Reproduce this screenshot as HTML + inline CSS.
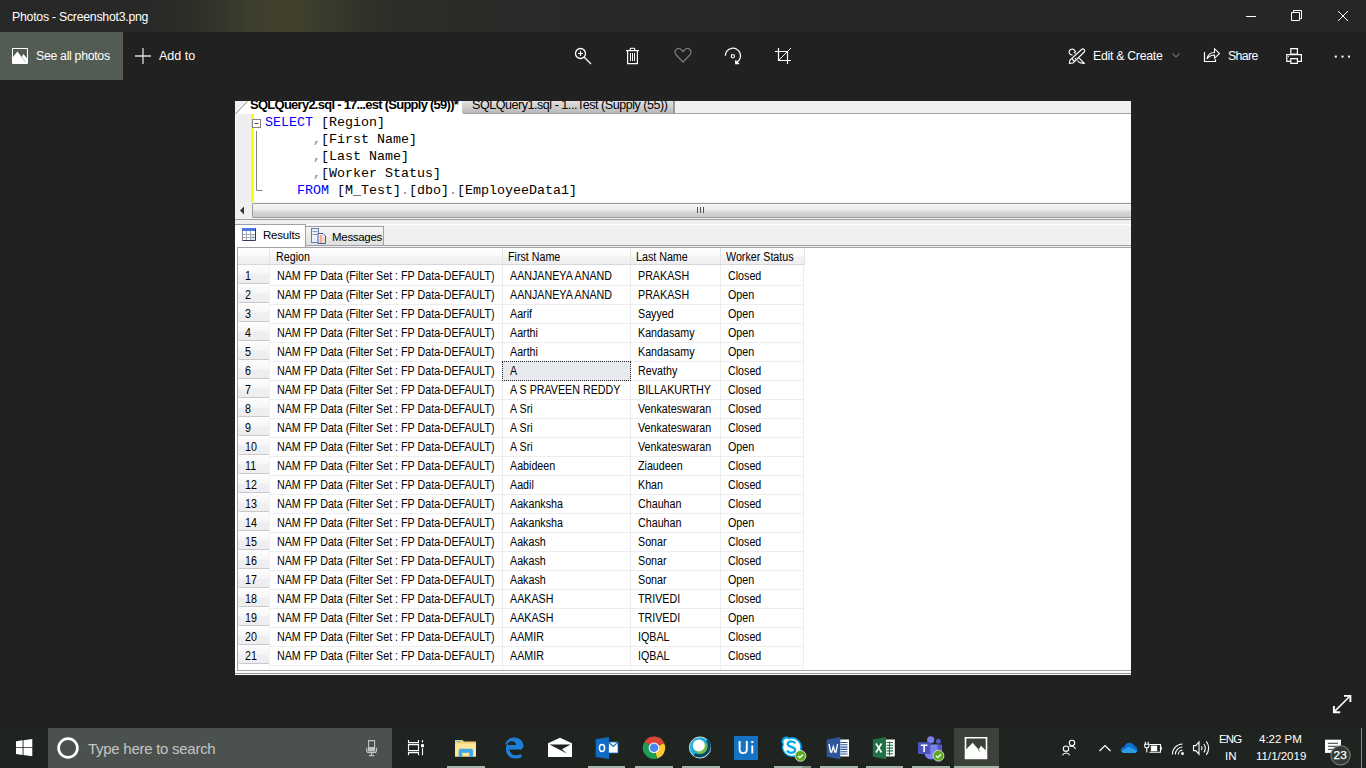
<!DOCTYPE html>
<html><head><meta charset="utf-8"><title>Photos</title>
<style>
*{margin:0;padding:0;box-sizing:border-box}
html,body{width:1366px;height:768px;overflow:hidden;background:#212121;font-family:"Liberation Sans",sans-serif;position:relative}
.a{position:absolute}
/* title bar */
#title{position:absolute;left:0;top:0;width:1366px;height:32px;background:
 linear-gradient(90deg,#272727 0,#282827 140px,#2c2c28 185px,#34342a 220px,#3d3d2d 250px,#41412e 275px,#41412e 295px,#3c3c2d 320px,#34342a 350px,#2e2e29 390px,#2b2b28 450px,#292928 560px,#272727 760px,#262626 1366px);}
#title .t{position:absolute;left:12px;top:9px;font-size:12px;color:#fff;white-space:pre}
#tb{position:absolute;left:0;top:32px;width:1366px;height:48px;background:#212121}
#seeall{position:absolute;left:0;top:32px;width:123px;height:48px;background:#535c53}
.lbl{position:absolute;color:#fff;font-size:14px;white-space:pre}
/* SSMS */
#ss{position:absolute;left:235px;top:101px;width:896px;height:574px;background:#fff;overflow:hidden}
.mono{font-family:"Liberation Mono",monospace;font-size:13.33px;white-space:pre;color:#000}
.kw{color:#0000ff}.gr{color:#808080}
/* grid */
.rn{position:absolute;left:238px;width:31px;height:19px;background:linear-gradient(#fdfdfd 0%,#f7f7f8 45%,#efeff1 55%,#eeeef0 100%);}
.rn span{position:absolute;left:7px;top:4px;font-size:12.3px;color:#000;transform:scaleX(0.87);transform-origin:0 0}
.rnl{position:absolute;left:239px;width:30px;height:1px;background:#c9c9cc}
.hl{position:absolute;left:269px;width:534px;height:1px;background:#ededed}
.c{position:absolute;height:18px;font-size:12.3px;letter-spacing:0px;color:#000;white-space:pre;padding-top:4px;transform:scaleX(0.87);transform-origin:0 0}
.t1{left:277px;letter-spacing:0px}.t2{left:510px}.t3{left:638px}.t4{left:728px}
.selbg{position:absolute;left:502px;width:129px;height:20px;background:#e6eaee}
.selbox{position:absolute;left:502px;width:129px;height:20px;border:1px dotted #222}
.vl{position:absolute;top:265px;width:1px;height:405px;background:#ededed}
.hd{position:absolute;top:248px;height:17px;background:linear-gradient(#fff 0%,#fbfbfb 45%,#f2f2f4 55%,#efeff1 100%);border-right:1px solid #e4e4e6}
.hd span{position:absolute;top:2px;font-size:12.3px;color:#000;white-space:pre;transform:scaleX(0.87);transform-origin:0 0}
/* taskbar */
#task{position:absolute;left:0;top:728px;width:1366px;height:40px;background:#1f2421}
#search{position:absolute;left:48px;top:728px;width:344px;height:40px;background:#4b514d}
.ind{position:absolute;top:766px;height:2px;background:#a3b5a7}
.tray{position:absolute;color:#fff;font-size:12px;white-space:pre}

</style></head><body>
<div id="title"><div class="t" style="font-size:12.3px;top:10px;letter-spacing:-0.25px">Photos - Screenshot3.png</div>
<svg class="a" style="left:1240px;top:0" width="126" height="32" viewBox="1240 0 126 32">
 <path d="M1246 16.5h10" stroke="#fff" stroke-width="1"/>
 <path d="M1291.5 12.5h8v8h-8z M1293.5 12.5v-2h8v8h-2" stroke="#fff" stroke-width="1" fill="none"/>
 <path d="M1338 11l10 10M1348 11l-10 10" stroke="#fff" stroke-width="1"/>
</svg>
</div>
<div id="tb"></div>
<div id="seeall"></div>
<svg class="a" style="left:0;top:32px" width="1366" height="48" viewBox="0 32 1366 48">
 <!-- see all photos icon -->
 <path d="M12.5 48.5h15v15h-15z" stroke="#fff" fill="none" stroke-width="1"/>
 <path d="M13 57L17.4 51.6 21.6 57 23.3 54 27 58.2V63.5H13z" fill="#fff"/>
 <path d="M21.8 57.2l3.6 4.8" stroke="#535c53" stroke-width="0.7" stroke-dasharray="1 0.8"/>
 <!-- plus -->
 <path d="M143 48v16M135 56h16" stroke="#ddd" stroke-width="1.3"/>
 <!-- zoom -->
 <circle cx="580.5" cy="53.5" r="5" stroke="#fff" fill="none" stroke-width="1.3"/>
 <path d="M578 53.5h5M580.5 51v5" stroke="#fff" stroke-width="1.2"/>
 <path d="M584 57l7 7" stroke="#fff" stroke-width="1.3"/>
 <!-- trash -->
 <path d="M626 50.6h13M627.6 50.6v13h9.8v-13" stroke="#fff" fill="none" stroke-width="1.2"/>
 <path d="M630.3 50.4v-1.6a.5.5 0 0 1 .5-.5h3.4a.5.5 0 0 1 .5.5v1.6" stroke="#fff" fill="none" stroke-width="1.1"/>
 <path d="M630.5 53v8M632.5 53v8M634.5 53v8" stroke="#fff" stroke-width="1"/>
 <!-- heart -->
 <path d="M683 62l-6.8-7c-1.6-1.7-1.6-4.2 0-5.5 1.6-1.3 3.9-1.1 5.3.5l1.5 1.5 1.5-1.5c1.4-1.6 3.7-1.8 5.3-.5 1.6 1.3 1.6 3.8 0 5.5z" stroke="#7c7c7c" fill="none" stroke-width="1.2" stroke-linejoin="round"/>
 <!-- rotate -->
 <path d="M725.3 55.8a7.6 7.6 0 1 1 11.3 6.6" stroke="#fff" fill="none" stroke-width="1.25"/>
 <path d="M735.8 60.3v3.2h3.3" stroke="#fff" fill="none" stroke-width="1.4"/>
 <path d="M736.2 63.1l1.4-1.4" stroke="#fff" stroke-width="1.4"/>
 <rect x="731.4" y="54.8" width="2.9" height="2.9" rx="0.6" stroke="#fff" fill="none" stroke-width="1.1"/>
 <!-- crop -->
 <path d="M778.5 48v12.5h12.5M775 51.5h12.5v12.5" stroke="#fff" fill="none" stroke-width="1.2"/>
 <path d="M778.8 60.2l12.2-12.2" stroke="#fff" fill="none" stroke-width="1"/>
 <!-- edit & create -->
 <g stroke="#fff" fill="none" stroke-width="1.15" stroke-linejoin="round">
  <path d="M1081.6 49.5a1.8 1.8 0 0 1 2.6 2.5L1072.9 63 1069.4 63.5 1069.9 60.1z"/>
  <path d="M1071.6 58.5l2.9 2.9"/>
  <path d="M1075.4 53.6l-1.5-1.5M1072.6 54.9c-1.3.2-2.8-.4-3.3-1.8-.6-1.6.4-3.4 2-3.8 1.5-.4 3 .3 3.6 1.6l1.1 1.3"/>
  <path d="M1078.6 57.7l5.8 5.8-3.6-.6c-1.4-.3-2.6-1.2-3.3-2.4"/>
 </g>
 <circle cx="1075.3" cy="58.5" r="0.7" fill="#fff"/>
 <path d="M1172.5 53.5l3.5 3.5 3.5-3.5" stroke="#5d6d5d" fill="none" stroke-width="1.2"/>
 <!-- share -->
 <path d="M1204.5 52v9.5h11v-2.3" stroke="#fff" fill="none" stroke-width="1.2"/>
 <path d="M1207 58.8c0.8-4 3.5-6.3 7.5-6.3v-3.8l5 4.8-5 4.8v-3.3c-3 0-5.5 1.3-7.5 3.8z" stroke="#fff" fill="none" stroke-width="1.1" stroke-linejoin="miter"/>
 <!-- print -->
 <path d="M1290.8 48.6h6.6v5.4h-6.6z" stroke="#fff" fill="none" stroke-width="1.2"/>
 <path d="M1286.8 54.6h14.6v6.8h-14.6z" stroke="#fff" fill="none" stroke-width="1.2"/>
 <path d="M1290.8 58.6h6.6v4.8h-6.6z" stroke="#fff" fill="#212121" stroke-width="1.2"/>
 <circle cx="1288.6" cy="56.6" r="0.55" fill="#fff"/>
 <!-- dots -->
 <rect x="1334.8" y="55.6" width="2" height="2" fill="#fff"/><rect x="1341.5" y="55.6" width="2" height="2" fill="#fff"/><rect x="1348" y="55.6" width="2" height="2" fill="#fff"/>
</svg>
<div class="lbl" style="left:36px;top:49px;font-size:12.3px;letter-spacing:-0.3px">See all photos</div>
<div class="lbl" style="left:159px;top:49px;font-size:12.5px">Add to</div>
<div class="lbl" style="left:1093px;top:49px;font-size:12.3px;letter-spacing:-0.28px">Edit &amp; Create</div>
<div class="lbl" style="left:1228px;top:49px;font-size:12.3px;letter-spacing:-0.6px">Share</div>

<!-- SSMS screenshot -->
<div id="ss"></div>
<!-- tab strip -->
<div class="a" style="left:235px;top:101px;width:896px;height:13px;background:#f0f0f0"></div>
<div class="a" style="left:235px;top:113px;width:896px;height:1px;background:#a0a0a0"></div>
<svg class="a" style="left:235px;top:101px" width="228" height="14" viewBox="0 0 228 14">
 <path d="M0 13L12 0H228V14H0z" fill="#fff"/>
 <path d="M0.5 13L12.5 0.5" stroke="#8a8a8a" stroke-width="1"/>
 <rect x="0" y="13" width="1" height="1" fill="#fff"/>
</svg>
<div class="a" style="left:235px;top:101px;width:896px;height:13px;overflow:hidden">
 <div class="a" style="left:15px;top:-4px;font-family:'Liberation Sans';font-weight:bold;font-size:13px;letter-spacing:-0.74px;white-space:pre;color:#000">SQLQuery2.sql - 17...est (Supply (59))*</div>
 <div class="a" style="left:227px;top:0;width:213px;height:12px;background:linear-gradient(#e2e2e2,#b9b9b9);border-right:2px solid #9a9a9a"></div>
 <div class="a" style="left:237px;top:-3px;font-family:'Liberation Sans';font-size:12.5px;letter-spacing:-0.45px;white-space:pre;color:#000">SQLQuery1.sql - 1...Test (Supply (55))</div>
</div>
<!-- editor -->
<div class="a" style="left:235px;top:114px;width:16px;height:88px;background:#eeeef0"></div>
<div class="a" style="left:235px;top:114px;width:1px;height:88px;background:#fff"></div>
<div class="a" style="left:251px;top:114px;width:3px;height:88px;background:#ffff00"></div>
<svg class="a" style="left:250px;top:114px" width="16" height="88" viewBox="0 0 16 88">
 <rect x="2.5" y="5.5" width="8" height="8" stroke="#808080" fill="#fff" stroke-width="1"/>
 <path d="M4.5 9.5h4" stroke="#555" stroke-width="1"/>
 <path d="M6.5 17v59.5h6" stroke="#808080" fill="none" stroke-width="1"/>
</svg>
<div class="a mono" style="left:265px;top:114px;line-height:17px"><span class="kw">SELECT</span> [Region]
      <span class="gr">,</span>[First Name]
      <span class="gr">,</span>[Last Name]
      <span class="gr">,</span>[Worker Status]
    <span class="kw">FROM</span> [M_Test]<span class="gr">.</span>[dbo]<span class="gr">.</span>[EmployeeData1]</div>
<!-- h scrollbar -->
<div class="a" style="left:235px;top:202px;width:896px;height:17px;background:#f0f0f0"></div>
<div class="a" style="left:235px;top:219px;width:896px;height:1px;background:#a0a0a0"></div>
<svg class="a" style="left:235px;top:202px" width="17" height="17"><path d="M5 8.5l4-4v8z" fill="#333"/></svg>
<div class="a" style="left:252px;top:203px;width:879px;height:15px;border:1px solid #9c9c9c;border-right:none;border-radius:2px 0 0 2px;background:linear-gradient(#f6f6f6 0%,#efefef 40%,#d8d8da 60%,#c9c9cc 100%)"></div>
<svg class="a" style="left:696px;top:205px" width="10" height="10"><path d="M1.5 2v6M4.5 2v6M7.5 2v6" stroke="#555" stroke-width="1"/></svg>
<!-- splitter + results tabs -->
<div class="a" style="left:235px;top:220px;width:896px;height:4px;background:#f0f0f0"></div>
<div class="a" style="left:235px;top:225px;width:896px;height:22px;background:#f0f0f0"></div>
<div class="a" style="left:235px;top:224px;width:71px;height:23px;background:#fff;border-right:1px solid #a0a0a8;border-top:1px solid #a0a0a8"></div>
<div class="a" style="left:306px;top:226px;width:78px;height:20px;background:linear-gradient(#f6f6f6,#e0e0e0);border:1px solid #a0a0a8;border-left:none"></div>
<div class="a" style="left:305px;top:245px;width:826px;height:1px;background:#9da0aa"></div>
<svg class="a" style="left:242px;top:228px" width="15" height="14" viewBox="0 0 15 14">
 <rect x="0" y="0" width="14" height="13" fill="#fff"/>
 <rect x="0" y="0" width="14" height="3" fill="#4a78e0"/>
 <path d="M0.5 3v9.5" stroke="#8a8aa0" fill="none"/><path d="M0.5 12.5h13V0.5" stroke="#333a5a" fill="none"/>
 <path d="M1 6.5h12M1 9.5h12M4.5 3v9M8.5 3v9" stroke="#a8a8b0" stroke-width="1"/>
 <rect x="9.5" y="7" width="3" height="2" fill="#bfe0f8"/><rect x="9.5" y="10" width="3" height="2" fill="#bfe0f8"/>
</svg>
<div class="a" style="left:263px;top:229px;font-size:11.5px;letter-spacing:-0.2px;color:#000">Results</div>
<svg class="a" style="left:311px;top:228px" width="16" height="16" viewBox="0 0 16 16">
 <rect x="0.5" y="0.5" width="7" height="14" fill="#e8f0f8" stroke="#6a78b0"/>
 <path d="M1.5 3.5h5M1.5 6.5h5" stroke="#8a98b8"/>
 <path d="M7 5.5h5l2.5 2.5v7.5H7z" fill="#fff" stroke="#4a58a0"/>
 <path d="M8.5 8h3M8.5 10h3M8.5 12h3M8.5 14h3" stroke="#f05a28"/>
 <path d="M12.5 10h1M12.5 12h1M12.5 14h1" stroke="#4a9a30"/>
</svg>
<div class="a" style="left:332px;top:231px;font-size:11.5px;letter-spacing:-0.3px;color:#000">Messages</div>
<!-- grid -->
<div class="a" style="left:237px;top:247px;width:894px;height:424px;background:#fff;border:1px solid #a3a3a8;border-right:none"></div>
<div class="hd" style="left:238px;width:32px"></div>
<div class="hd" style="left:270px;width:233px"><span style="left:6px">Region</span></div>
<div class="hd" style="left:503px;width:128px"><span style="left:5px">First Name</span></div>
<div class="hd" style="left:631px;width:90px"><span style="left:5px">Last Name</span></div>
<div class="hd" style="left:721px;width:84px"><span style="left:5px">Worker Status</span></div>
<div class="a" style="left:238px;top:264px;width:566px;height:1px;background:#d8d8da"></div>
<div class="vl" style="left:502px"></div>
<div class="vl" style="left:630px"></div>
<div class="vl" style="left:720px"></div>
<div class="vl" style="left:803px"></div>
<div class="vl" style="left:269px;background:#f2f2f2"></div>
<div class="selbg" style="top:361px"></div>
<div class="rn" style="top:265px"><span>1</span></div>
<div class="c t1" style="top:265px">NAM FP Data (Filter Set : FP Data-DEFAULT)</div>
<div class="c t2" style="top:265px">AANJANEYA ANAND</div>
<div class="c t3" style="top:265px">PRAKASH</div>
<div class="c t4" style="top:265px">Closed</div>
<div class="rn" style="top:284px"><span>2</span></div>
<div class="c t1" style="top:284px">NAM FP Data (Filter Set : FP Data-DEFAULT)</div>
<div class="c t2" style="top:284px">AANJANEYA ANAND</div>
<div class="c t3" style="top:284px">PRAKASH</div>
<div class="c t4" style="top:284px">Open</div>
<div class="rn" style="top:303px"><span>3</span></div>
<div class="c t1" style="top:303px">NAM FP Data (Filter Set : FP Data-DEFAULT)</div>
<div class="c t2" style="top:303px">Aarif</div>
<div class="c t3" style="top:303px">Sayyed</div>
<div class="c t4" style="top:303px">Open</div>
<div class="rn" style="top:322px"><span>4</span></div>
<div class="c t1" style="top:322px">NAM FP Data (Filter Set : FP Data-DEFAULT)</div>
<div class="c t2" style="top:322px">Aarthi</div>
<div class="c t3" style="top:322px">Kandasamy</div>
<div class="c t4" style="top:322px">Open</div>
<div class="rn" style="top:341px"><span>5</span></div>
<div class="c t1" style="top:341px">NAM FP Data (Filter Set : FP Data-DEFAULT)</div>
<div class="c t2" style="top:341px">Aarthi</div>
<div class="c t3" style="top:341px">Kandasamy</div>
<div class="c t4" style="top:341px">Open</div>
<div class="rn" style="top:360px"><span>6</span></div>
<div class="c t1" style="top:360px">NAM FP Data (Filter Set : FP Data-DEFAULT)</div>
<div class="c t2" style="top:360px">A</div>
<div class="c t3" style="top:360px">Revathy</div>
<div class="c t4" style="top:360px">Closed</div>
<div class="rn" style="top:379px"><span>7</span></div>
<div class="c t1" style="top:379px">NAM FP Data (Filter Set : FP Data-DEFAULT)</div>
<div class="c t2" style="top:379px">A S PRAVEEN REDDY</div>
<div class="c t3" style="top:379px">BILLAKURTHY</div>
<div class="c t4" style="top:379px">Closed</div>
<div class="rn" style="top:398px"><span>8</span></div>
<div class="c t1" style="top:398px">NAM FP Data (Filter Set : FP Data-DEFAULT)</div>
<div class="c t2" style="top:398px">A Sri</div>
<div class="c t3" style="top:398px">Venkateswaran</div>
<div class="c t4" style="top:398px">Closed</div>
<div class="rn" style="top:417px"><span>9</span></div>
<div class="c t1" style="top:417px">NAM FP Data (Filter Set : FP Data-DEFAULT)</div>
<div class="c t2" style="top:417px">A Sri</div>
<div class="c t3" style="top:417px">Venkateswaran</div>
<div class="c t4" style="top:417px">Closed</div>
<div class="rn" style="top:436px"><span>10</span></div>
<div class="c t1" style="top:436px">NAM FP Data (Filter Set : FP Data-DEFAULT)</div>
<div class="c t2" style="top:436px">A Sri</div>
<div class="c t3" style="top:436px">Venkateswaran</div>
<div class="c t4" style="top:436px">Open</div>
<div class="rn" style="top:455px"><span>11</span></div>
<div class="c t1" style="top:455px">NAM FP Data (Filter Set : FP Data-DEFAULT)</div>
<div class="c t2" style="top:455px">Aabideen</div>
<div class="c t3" style="top:455px">Ziaudeen</div>
<div class="c t4" style="top:455px">Closed</div>
<div class="rn" style="top:474px"><span>12</span></div>
<div class="c t1" style="top:474px">NAM FP Data (Filter Set : FP Data-DEFAULT)</div>
<div class="c t2" style="top:474px">Aadil</div>
<div class="c t3" style="top:474px">Khan</div>
<div class="c t4" style="top:474px">Closed</div>
<div class="rn" style="top:493px"><span>13</span></div>
<div class="c t1" style="top:493px">NAM FP Data (Filter Set : FP Data-DEFAULT)</div>
<div class="c t2" style="top:493px">Aakanksha</div>
<div class="c t3" style="top:493px">Chauhan</div>
<div class="c t4" style="top:493px">Closed</div>
<div class="rn" style="top:512px"><span>14</span></div>
<div class="c t1" style="top:512px">NAM FP Data (Filter Set : FP Data-DEFAULT)</div>
<div class="c t2" style="top:512px">Aakanksha</div>
<div class="c t3" style="top:512px">Chauhan</div>
<div class="c t4" style="top:512px">Open</div>
<div class="rn" style="top:531px"><span>15</span></div>
<div class="c t1" style="top:531px">NAM FP Data (Filter Set : FP Data-DEFAULT)</div>
<div class="c t2" style="top:531px">Aakash</div>
<div class="c t3" style="top:531px">Sonar</div>
<div class="c t4" style="top:531px">Closed</div>
<div class="rn" style="top:550px"><span>16</span></div>
<div class="c t1" style="top:550px">NAM FP Data (Filter Set : FP Data-DEFAULT)</div>
<div class="c t2" style="top:550px">Aakash</div>
<div class="c t3" style="top:550px">Sonar</div>
<div class="c t4" style="top:550px">Closed</div>
<div class="rn" style="top:569px"><span>17</span></div>
<div class="c t1" style="top:569px">NAM FP Data (Filter Set : FP Data-DEFAULT)</div>
<div class="c t2" style="top:569px">Aakash</div>
<div class="c t3" style="top:569px">Sonar</div>
<div class="c t4" style="top:569px">Open</div>
<div class="rn" style="top:588px"><span>18</span></div>
<div class="c t1" style="top:588px">NAM FP Data (Filter Set : FP Data-DEFAULT)</div>
<div class="c t2" style="top:588px">AAKASH</div>
<div class="c t3" style="top:588px">TRIVEDI</div>
<div class="c t4" style="top:588px">Closed</div>
<div class="rn" style="top:607px"><span>19</span></div>
<div class="c t1" style="top:607px">NAM FP Data (Filter Set : FP Data-DEFAULT)</div>
<div class="c t2" style="top:607px">AAKASH</div>
<div class="c t3" style="top:607px">TRIVEDI</div>
<div class="c t4" style="top:607px">Open</div>
<div class="rn" style="top:626px"><span>20</span></div>
<div class="c t1" style="top:626px">NAM FP Data (Filter Set : FP Data-DEFAULT)</div>
<div class="c t2" style="top:626px">AAMIR</div>
<div class="c t3" style="top:626px">IQBAL</div>
<div class="c t4" style="top:626px">Closed</div>
<div class="rn" style="top:645px"><span>21</span></div>
<div class="c t1" style="top:645px">NAM FP Data (Filter Set : FP Data-DEFAULT)</div>
<div class="c t2" style="top:645px">AAMIR</div>
<div class="c t3" style="top:645px">IQBAL</div>
<div class="c t4" style="top:645px">Closed</div>
<div class="hl" style="top:285px"></div>
<div class="rnl" style="top:283px"></div>
<div class="hl" style="top:304px"></div>
<div class="rnl" style="top:302px"></div>
<div class="hl" style="top:323px"></div>
<div class="rnl" style="top:321px"></div>
<div class="hl" style="top:342px"></div>
<div class="rnl" style="top:340px"></div>
<div class="hl" style="top:361px"></div>
<div class="rnl" style="top:359px"></div>
<div class="hl" style="top:380px"></div>
<div class="rnl" style="top:378px"></div>
<div class="hl" style="top:399px"></div>
<div class="rnl" style="top:397px"></div>
<div class="hl" style="top:418px"></div>
<div class="rnl" style="top:416px"></div>
<div class="hl" style="top:437px"></div>
<div class="rnl" style="top:435px"></div>
<div class="hl" style="top:456px"></div>
<div class="rnl" style="top:454px"></div>
<div class="hl" style="top:475px"></div>
<div class="rnl" style="top:473px"></div>
<div class="hl" style="top:494px"></div>
<div class="rnl" style="top:492px"></div>
<div class="hl" style="top:513px"></div>
<div class="rnl" style="top:511px"></div>
<div class="hl" style="top:532px"></div>
<div class="rnl" style="top:530px"></div>
<div class="hl" style="top:551px"></div>
<div class="rnl" style="top:549px"></div>
<div class="hl" style="top:570px"></div>
<div class="rnl" style="top:568px"></div>
<div class="hl" style="top:589px"></div>
<div class="rnl" style="top:587px"></div>
<div class="hl" style="top:608px"></div>
<div class="rnl" style="top:606px"></div>
<div class="hl" style="top:627px"></div>
<div class="rnl" style="top:625px"></div>
<div class="hl" style="top:646px"></div>
<div class="rnl" style="top:644px"></div>
<div class="hl" style="top:665px"></div>
<div class="rnl" style="top:663px"></div>
<div class="selbox" style="top:361px"></div>
<div class="a" style="left:235px;top:671px;width:896px;height:2px;background:#fff"></div>
<div class="a" style="left:235px;top:673px;width:896px;height:1px;background:#8e909a"></div>
<div class="a" style="left:235px;top:674px;width:896px;height:1px;background:#fff"></div>

<!-- expand icon -->
<svg class="a" style="left:1330px;top:691px" width="24" height="24" viewBox="1330 691 24 24">
 <path d="M1334.6 711.4l15.2-15.2" stroke="#fff" stroke-width="1.5"/>
 <path d="M1344 695.9h6.4v6.2M1333.9 705.9v6.3h6.3" stroke="#fff" fill="none" stroke-width="1.9"/>
</svg>

<!-- taskbar -->
<div id="task"></div>
<div id="search"></div>
<div class="a" style="left:954px;top:728px;width:45px;height:40px;background:#3a4239"></div>
<svg class="a" style="left:0;top:728px" width="1366" height="40" viewBox="0 728 1366 40">
 <!-- windows logo -->
 <path d="M16 741.2l6.6-.9v6.9H16z M23.5 740.2l8.8-1.2v8.2h-8.8z M16 748h6.6v6.9l-6.6-.9z M23.5 748h8.8v8.2l-8.8-1.2z" fill="#fff"/>
 <!-- cortana -->
 <circle cx="68" cy="748" r="9.4" stroke="#fff" stroke-width="2.7" fill="none"/>
 <!-- mic -->
 <path d="M368.6 740.6h6v10.4h-6z" stroke="#c4c4c4" fill="none" stroke-width="1.1"/>
 <path d="M368.6 747h6v4h-6z" fill="#c4c4c4"/>
 <path d="M366.7 747.8v2.8a2 2 0 0 0 2 2h5.8a2 2 0 0 0 2-2v-2.8M371.6 752.6v2.8M369 755.6h5.2" stroke="#c4c4c4" fill="none" stroke-width="1.1"/>
 <!-- task view -->
 <path d="M408.5 740v2.6h10v-2.6M408.5 744.6h10v6h-10z M408.5 755.2v-2.6h10v2.6M422.5 740v2.6M422.5 748.2v7" stroke="#fff" fill="none" stroke-width="1.1"/>
 <rect x="421" y="744.2" width="3" height="3" fill="#fff"/>
 <!-- explorer -->
 <path d="M455 740h7.5l1.5 1.5H476V756.5H455z" fill="#f2cf6a"/>
 <path d="M455 743.5h21V756.5H455z" fill="#fde59a"/>
 <path d="M456 740.8h5v1.2h-5z" fill="#78c0e8"/>
 <path d="M458.7 757v-6.5a1.8 1.8 0 0 1 1.8-1.8h10.7a1.8 1.8 0 0 1 1.8 1.8V757h-3.6v-4.3h-7.1V757z" fill="#3ea8ea"/>
 <!-- edge -->
 <path d="M521.5 749.5h-12c0.3 3.5 3 5.8 6.8 5.8 2.2 0 4-.5 5.2-1.2v3.2c-1.5.8-3.5 1.2-5.8 1.2-6 0-9.8-4-9.8-9.5 0-3 1.2-6 3.5-7.8-1 1.3-1.5 2.5-1.7 3.8h8.5c-.2-2.3-1.8-3.8-4.3-3.8-3 0-5 1.8-7 4.3.8-4.8 4.5-8 9.3-8 5.5 0 9.3 3.8 9.3 9z" fill="#1e7fd8"/>
 <!-- mail -->
 <path d="M548 743.3L560 737.8 572 743.3V757H548z" fill="#fff"/>
 <path d="M549.5 744.4H570.6L562 749.2 566.8 753.4z" fill="#1e2320"/>
 <!-- outlook -->
 <path d="M595.7 739.2L609 736.9V759L595.7 756.9z" fill="#0f6cc4"/>
 <path d="M608.5 742h9.5v11h-9.5z" fill="#fff"/>
 <path d="M608.5 742l4.75 4.5 4.75-4.5" stroke="#0f6cc4" fill="none" stroke-width="1.1"/>
 <path d="M608.5 742h9.5v11h-9.5z" stroke="#0f6cc4" fill="none" stroke-width="0.8"/>
 <ellipse cx="602" cy="748" rx="2.6" ry="3.4" stroke="#fff" stroke-width="1.5" fill="none"/>
 <!-- chrome -->
 <path d="M654 747.8L644.40 742.03A11.2 11.2 0 0 1 664.19 743.16z" fill="#db4437"/><path d="M654 747.8L664.19 743.16A11.2 11.2 0 0 1 657.09 758.57z" fill="#fcc934"/><path d="M654 747.8L657.09 758.57A11.2 11.2 0 0 1 644.40 742.03z" fill="#1e9e55"/>
 <circle cx="654" cy="747.8" r="5.3" fill="#fff"/>
 <circle cx="654" cy="747.8" r="4.3" fill="#4a86f0"/>
 <!-- webex -->
 <circle cx="700" cy="747.5" r="10.6" fill="#1ab0e0" stroke="#d8dcdc" stroke-width="1"/>
 <path d="M707.5 740a10 10 0 0 1-13 14.5" stroke="#0b4566" stroke-width="3.2" fill="none"/>
 <circle cx="700.6" cy="747.3" r="6.6" fill="#6fbe44"/>
 <circle cx="698.8" cy="745.6" r="6" fill="#fff"/>
 <!-- ui path -->
 <rect x="734" y="736" width="24" height="24" fill="#1672c4"/>
 <path d="M739.6 741v8.6c0 2.2 1.3 3.5 3.6 3.5s3.6-1.3 3.6-3.5V741" stroke="#fff" stroke-width="1.9" fill="none"/>
 <path d="M752.3 745.5v8" stroke="#fff" stroke-width="1.9"/>
 <rect x="751.3" y="741" width="2" height="2" fill="#fff"/>
 <!-- skype -->
 <path d="M782 743.5a4.8 4.8 0 0 1 7-6 10 10 0 0 1 12.5 12 4.8 4.8 0 0 1-6.5 7 10 10 0 0 1-12.5-12.5z" fill="#00a8ec"/>
 <path d="M783.8 743.8a3.4 3.4 0 0 1 5-4.4 8.4 8.4 0 0 1 11 10.2 3.4 3.4 0 0 1-4.6 5.2 8.4 8.4 0 0 1-11.2-10.8z" fill="#fff"/>
 <path d="M795.3 743.3c-.8-1.3-2.4-2-4-2-2.2 0-3.6 1.2-3.6 2.7 0 3.5 7.5 2.2 7.5 5.8 0 1.7-1.6 3-3.9 3-1.9 0-3.4-.8-4.2-2.3" stroke="#00a8ec" stroke-width="2.2" fill="none"/>
 <circle cx="800.5" cy="755.9" r="5.4" fill="#5aa91e" stroke="#d8e0d8" stroke-width="0.9"/>
 <path d="M798 756l1.8 1.8 3.2-3.3" stroke="#fff" fill="none" stroke-width="1.3"/>
 <!-- word -->
 <path d="M838 739.5h11v17h-11z" fill="#fff"/>
 <path d="M840.5 742.5h7M840.5 744.8h7M840.5 747.1h7M840.5 749.4h7M840.5 751.7h7M840.5 754h7" stroke="#2b579a" stroke-width="1.1"/>
 <path d="M826.7 739.5L840.3 737V759.3L826.7 756.7z" fill="#2b579a"/>
 <path d="M829 744l1.6 8h1.1l1.6-5.5 1.6 5.5h1.1l1.6-8" stroke="#fff" stroke-width="1.3" fill="none"/>
 <!-- excel -->
 <path d="M884.5 739.5h10.3v17h-10.3z" fill="#fff"/>
 <path d="M886.5 742.5h6.5M886.5 745.3h6.5M886.5 748.1h6.5M886.5 750.9h6.5M886.5 753.7h6.5M889.5 741.5v14" stroke="#217346" stroke-width="1.1"/>
 <path d="M872.8 739.5L886 737V759.3L872.8 756.7z" fill="#217346"/>
 <path d="M876 743.5l5.5 9M881.5 743.5l-5.5 9" stroke="#fff" stroke-width="1.6"/>
 <!-- teams -->
 <circle cx="930.7" cy="739.8" r="3.6" fill="#7b83eb"/>
 <circle cx="938.4" cy="741.3" r="2.5" fill="#5059c9"/>
 <path d="M934.5 744.5h7.5v7a4 4 0 0 1-7.5 1.5z" fill="#5059c9"/>
 <path d="M924.5 744.5h13v8.5a6.5 6.5 0 0 1-13 0z" fill="#7b83eb"/>
 <path d="M918 742.2h12.3V754H918z" fill="#4b53bc"/>
 <path d="M920.8 745.2h6.7M924.15 745.2v6.8" stroke="#fff" stroke-width="1.6"/>
 <circle cx="938.5" cy="755.7" r="5.4" fill="#5aa91e" stroke="#d8e0d8" stroke-width="0.9"/>
 <path d="M936 755.8l1.8 1.8 3.2-3.3" stroke="#fff" fill="none" stroke-width="1.3"/>
 <!-- photos -->
 <path d="M965.5 737.8h21v20.6h-21z" stroke="#fff" stroke-width="1.6" fill="none"/>
 <path d="M965 750.5L972.7 742.7 978.5 749.5 981 745.8 987 751.5V759H965z" fill="#fff"/>
 <path d="M978.3 749.3l1.4 2.2" stroke="#3a4239" stroke-width="0.7"/>
 <!-- tray people -->
 <g stroke="#fff" fill="none" stroke-width="1.1">
  <circle cx="1066" cy="748.7" r="2.7"/><path d="M1062.4 755.2a4.2 4.2 0 0 1 7.4 0"/>
  <circle cx="1072" cy="743" r="2.7"/><path d="M1069.6 746.6a4.2 4.2 0 0 1 5.9 2.4"/>
 </g>
 <!-- chevron -->
 <path d="M1099.5 751l5.5-5.5 5.5 5.5" stroke="#fff" fill="none" stroke-width="1.2"/>
 <!-- onedrive -->
 <path d="M1121 750.3c0-1.9 1.4-3.2 3.1-3.3.6-2.6 2.9-4.3 5.4-4.3 2.3 0 4.2 1.3 5 3.3 1.7.2 2.8 1.7 2.8 3.4 0 2-1.5 3.5-3.4 3.5h-10c-1.6 0-2.9-1.2-2.9-2.6z" fill="#0f6fd0"/>
 <path d="M1121.3 751.3l7.5-4.6 8.3 4.2c-.3 1.2-1.5 2-2.9 2h-10c-1.3 0-2.5-.7-2.9-1.6z" fill="#2b9fe8"/>
 <!-- power -->
 <g stroke="#fff" fill="none" stroke-width="1.1">
  <path d="M1145.4 741.8v2.4M1148.2 741.8v2.4M1144.7 744.2h4.2v1.6a2.1 2.1 0 0 1-4.2 0z M1146.8 748v4.6"/>
  <path d="M1149.5 744.5h11v7.8h-11.2"/>
 </g>
 <path d="M1160.8 746.8h1v3.2h-1z" fill="#fff"/>
 <path d="M1150.8 745.6h6.4v5.6h-6.4z" fill="#fff"/>
 <!-- wifi -->
 <g stroke="#fff" fill="none" stroke-width="1.1">
  <path d="M1172.4 754.5a10.3 10.3 0 0 1 10-10.5"/>
  <path d="M1175.4 754.5a7.3 7.3 0 0 1 7-7.5"/>
  <path d="M1178.4 754.5a4.3 4.3 0 0 1 4-4.4"/>
 </g>
 <circle cx="1182.5" cy="753.4" r="1.5" fill="#fff"/>
 <!-- volume -->
 <g stroke="#fff" fill="none" stroke-width="1.1">
  <path d="M1193.5 745.6h2.3l3.2-3.6v12.2l-3.2-3.6h-2.3z"/>
  <path d="M1201.5 746.3a3.5 3.5 0 0 1 0 3.8M1203.8 744a7 7 0 0 1 0 8.4M1206.3 741.3a11 11 0 0 1 0 13.6"/>
 </g>
 <!-- notification -->
 <path d="M1325 739.7h16v13.2h-16z" fill="#fff"/>
 <path d="M1328 743.3h10M1328 746.3h10M1328 749.4h10" stroke="#1e2320" stroke-width="0.9"/>
 <circle cx="1340.6" cy="755.4" r="9.6" fill="#323a35" stroke="#7a7e7a" stroke-width="1.1"/>
 <text x="1333.6" y="759" font-family="Liberation Sans" font-size="11.8" fill="#fff" stroke="#fff" stroke-width="0.25">23</text>
 <path d="M1361.5 728v40" stroke="#888" stroke-width="1"/>
</svg>
<div class="a" style="left:88px;top:740px;font-size:15px;letter-spacing:-0.27px;color:#c4c4c4;white-space:pre">Type here to search</div>
<div class="ind" style="left:447px;width:38px"></div>
<div class="ind" style="left:588px;width:37px"></div>
<div class="ind" style="left:635px;width:38px"></div>
<div class="ind" style="left:682px;width:38px"></div>
<div class="ind" style="left:774px;width:28px"></div><div class="ind" style="left:802px;width:9px;background:#849488"></div>
<div class="ind" style="left:820px;width:38px"></div>
<div class="ind" style="left:866px;width:37px"></div>
<div class="ind" style="left:912px;width:38px"></div>
<div class="ind" style="left:954px;width:45px"></div>
<div class="tray" style="left:1219px;top:733px;font-size:11.5px;letter-spacing:-0.9px">ENG</div>
<div class="tray" style="left:1225px;top:750px;font-size:11.5px">IN</div>
<div class="tray" style="left:1259px;top:733px;font-size:11.5px">4:22 PM</div>
<div class="tray" style="left:1256px;top:750px;font-size:11.5px">11/1/2019</div>

</body></html>
